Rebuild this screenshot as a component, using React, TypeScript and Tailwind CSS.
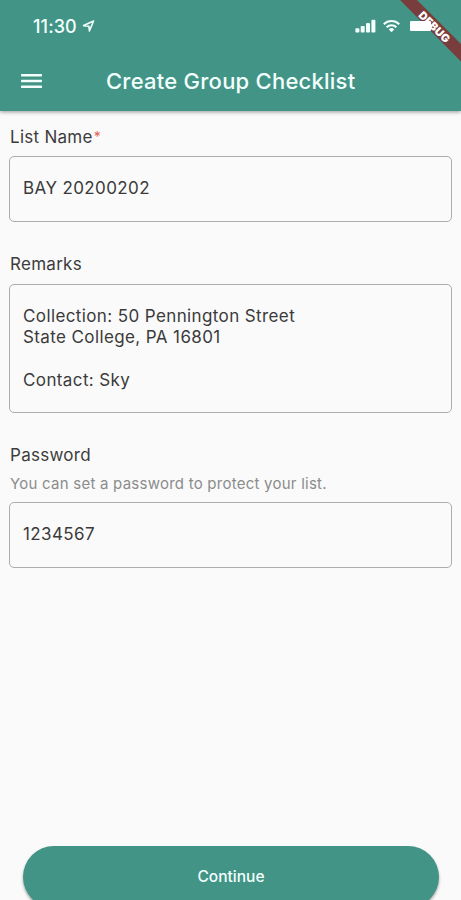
import React from 'react';

interface FieldProps {
  label: string;
  value: string;
  required?: boolean;
  hint?: string;
  className?: string;
  boxClassName: string;
}

const Field: React.FC<FieldProps> = ({ label, value, required, hint, className, boxClassName }) => {
  return (
    <div className={className}>
      <div className="flex h-6 items-center pl-px text-[17px] tracking-[0.28px] text-[#3c3c3c]">
        {label}
        {required && <span className="ml-px pb-1 text-[14px] text-[#e2604e] tracking-normal">*</span>}
      </div>
      {hint && (
        <div className="flex h-[22px] mt-[5px] items-center pl-px text-[15px] tracking-[0.24px] text-[#8c8c8c]">{hint}</div>
      )}
      <div
        className={`rounded-[5px] border border-[#adadad] px-[13px] pt-[21px] text-[17px] leading-[21.2px] tracking-[0.39px] whitespace-pre-line text-[#3a3a3a] ${boxClassName}`}
      >
        {value}
      </div>
    </div>
  );
};

const StatusBar: React.FC = () => {
  return (
    <div className="flex h-[52px] items-center pl-[33px] pr-[30px]">
      <span className="text-[18px] font-medium tracking-[0.1px]">11:30</span>
      <svg className="ml-[5px]" width="13" height="13" viewBox="0 0 13 13" fill="none" stroke="currentColor" strokeWidth="1.6" strokeLinejoin="round">
        <path d="M1.6 5.6 L11.6 1 L7.4 11 L6.9 6.2 Z" />
      </svg>
      <div className="ml-auto flex items-center">
        <svg width="21" height="14" viewBox="0 0 21 14" fill="currentColor">
          <rect x="0.4" y="9.2" width="4" height="4.3" rx="0.9" />
          <rect x="5.7" y="6.9" width="4" height="6.6" rx="0.9" />
          <rect x="11" y="4" width="4" height="9.5" rx="0.9" />
          <rect x="16.4" y="0.8" width="4" height="12.7" rx="0.9" />
        </svg>
        <svg className="ml-[7px]" width="17" height="14" viewBox="0 0 17 14" fill="none" stroke="currentColor" strokeWidth="2.1">
          <path d="M0.8 5.2 A10.9 10.9 0 0 1 16.2 5.2" />
          <path d="M3.6 8.2 A7 7 0 0 1 13.4 8.2" />
          <path d="M8.5 13.2 L5.8 10.4 A3.9 3.9 0 0 1 11.2 10.4 Z" fill="currentColor" stroke="none" />
        </svg>
        {/* battery sits above the debug ribbon */}
        <div className="relative z-10 ml-[10px] h-[10px] w-[21px] rounded-[1px] bg-white" />
      </div>
    </div>
  );
};

const DebugBanner: React.FC = () => {
  return (
    <svg className="absolute top-0 right-0" width="70" height="72" viewBox="0 0 70 72">
      <path d="M9 0 H26 L70 44 V61.5 Z" fill="#783d3c" />
      <text
        x="43.5"
        y="27"
        transform="rotate(45 43.5 27)"
        textAnchor="middle"
        dominantBaseline="central"
        className="fill-white font-['Inter',sans-serif] text-[11px] font-black tracking-[0.2px]"
      >
        DEBUG
      </text>
    </svg>
  );
};

const App: React.FC = () => {
  return (
    <div className="relative flex h-[900px] w-[461px] flex-col overflow-hidden bg-[#fafafa] font-['Inter',sans-serif]">
      <header className="h-[111px] shrink-0 bg-[#429486] text-[#f3fffc] shadow-[0_1px_4px_rgba(0,0,0,0.4)]">
        <StatusBar />
        <div className="flex h-[58px] items-center px-[21px]">
          <svg width="21" height="16" viewBox="0 0 21 16" fill="currentColor">
            <rect x="0" y="1" width="21" height="2.4" rx="0.6" />
            <rect x="0" y="6.8" width="21" height="2.4" rx="0.6" />
            <rect x="0" y="12.6" width="21" height="2.4" rx="0.6" />
          </svg>
          <h1 className="ml-[64px] text-[22px] font-medium tracking-[0.24px] whitespace-nowrap">Create Group Checklist</h1>
        </div>
      </header>

      <main className="flex-1 px-[9px] pt-[15px]">
        <Field label="List Name" value="BAY 20200202" required boxClassName="mt-[6px] h-[66px]" />
        <Field
          label="Remarks"
          value={'Collection: 50 Pennington Street\nState College, PA 16801\n\nContact: Sky'}
          className="mt-[31px]"
          boxClassName="mt-[7px] h-[129px]"
        />
        <Field
          label="Password"
          value="1234567"
          hint="You can set a password to protect your list."
          className="mt-[31px]"
          boxClassName="mt-[7px] h-[66px]"
        />
      </main>

      <button className="mr-[22px] -mb-[8px] ml-[23px] h-[62px] shrink-0 rounded-full bg-[#429486] text-[15.5px] font-medium text-[#f3fffc] shadow-[0_2px_3px_rgba(0,0,0,0.35)]">
        Continue
      </button>

      <DebugBanner />
    </div>
  );
};

export default App;
